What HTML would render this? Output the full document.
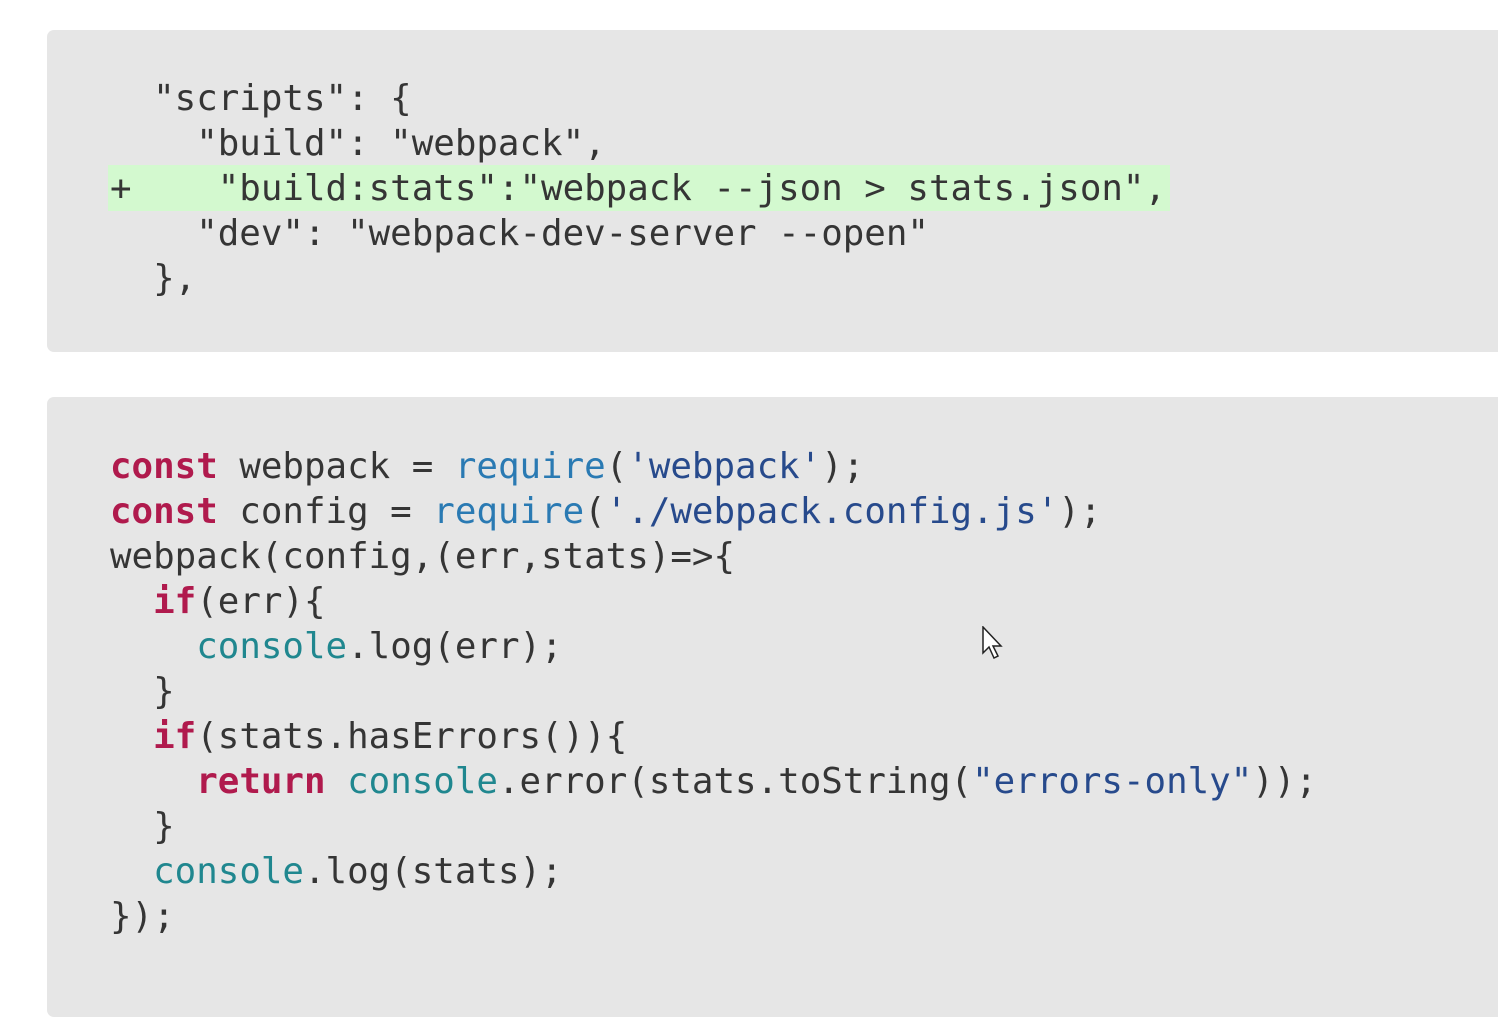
<!DOCTYPE html>
<html><head><style>
body{margin:0;background:#fff;width:1498px;height:974px;overflow:hidden;position:relative}
.b{position:absolute;left:47px;width:1470px;background:#e6e6e6;border-radius:7px}
pre{margin:0;position:absolute;left:110px;font-family:"DejaVu Sans Mono","Liberation Mono",monospace;font-size:35.8px;line-height:45px;color:#353535}
.hl{position:absolute;left:108px;top:165px;width:1062px;height:46px;background:#d3f9cf}
.k{color:#b01a4d;font-weight:bold}.f{color:#2a7ab3}.s{color:#274a8c}.c{color:#20878f}
</style></head><body>
<div class="b" style="top:30px;height:322px"></div>
<div class="hl"></div>
<pre style="top:76px">  "scripts": {
    "build": "webpack",
+    "build:stats":"webpack --json > stats.json",
    "dev": "webpack-dev-server --open"
  },</pre>
<div class="b" style="top:397px;height:620px"></div>
<pre style="top:444px"><span class="k">const</span> webpack = <span class="f">require</span>(<span class="s">'webpack'</span>);
<span class="k">const</span> config = <span class="f">require</span>(<span class="s">'./webpack.config.js'</span>);
webpack(config,(err,stats)=>{
  <span class="k">if</span>(err){
    <span class="c">console</span>.log(err);
  }
  <span class="k">if</span>(stats.hasErrors()){
    <span class="k">return</span> <span class="c">console</span>.error(stats.toString(<span class="s">"errors-only"</span>));
  }
  <span class="c">console</span>.log(stats);
});</pre>
<svg style="position:absolute;left:982px;top:626px" width="26" height="36" viewBox="0 0 26 36"><path d="M1 1 L1 27 L7 21 L12 32 L16 30 L11 20 L19 20 Z" fill="#fff" stroke="#222" stroke-width="1.5"/></svg>
</body></html>
